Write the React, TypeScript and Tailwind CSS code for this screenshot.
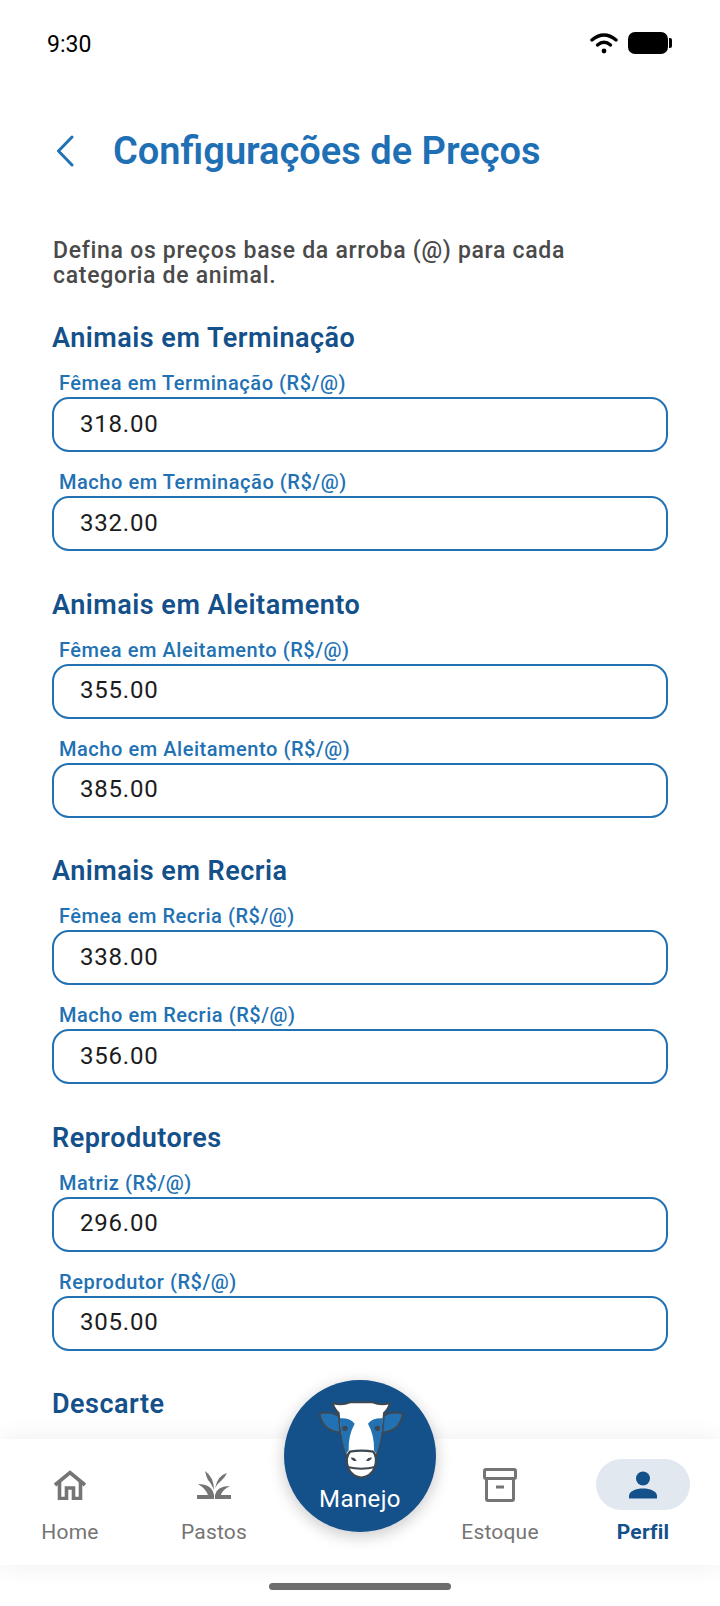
const SECTIONS = [
  {
    title: "Animais em Terminação",
    fields: [
      { label: "Fêmea em Terminação (R$/@)", value: "318.00" },
      { label: "Macho em Terminação (R$/@)", value: "332.00" },
    ],
  },
  {
    title: "Animais em Aleitamento",
    fields: [
      { label: "Fêmea em Aleitamento (R$/@)", value: "355.00" },
      { label: "Macho em Aleitamento (R$/@)", value: "385.00" },
    ],
  },
  {
    title: "Animais em Recria",
    fields: [
      { label: "Fêmea em Recria (R$/@)", value: "338.00" },
      { label: "Macho em Recria (R$/@)", value: "356.00" },
    ],
  },
  {
    title: "Reprodutores",
    fields: [
      { label: "Matriz (R$/@)", value: "296.00" },
      { label: "Reprodutor (R$/@)", value: "305.00" },
    ],
  },
];

function Field({ label, value }: { label: string; value: string }) {
  return (
    <div>
      <p className="pl-[7px] h-[28px] text-[20px] leading-[28px] font-medium tracking-[0.55px] text-[#2271b3]">
        {label}
      </p>
      <div className="flex items-center h-[55px] rounded-[17px] border-2 border-[#2271b3] pl-[26px] pb-[2px] text-[24px] tracking-[0.8px] text-[#1c1c1c]">
        {value}
      </div>
    </div>
  );
}

function CowLogo() {
  return (
    <svg width="120" height="100" viewBox="0 0 360 300">
      {/* ears */}
      <path
        d="M58 74 Q90 64 122 84 L132 130 Q96 132 76 112 Q62 96 58 74Z"
        fill="#2271b3"
        stroke="#3d4852"
        strokeWidth="6"
        strokeLinejoin="round"
      />
      <path
        d="M308 74 Q276 64 244 84 L234 130 Q272 132 292 112 Q306 96 308 74Z"
        fill="#2271b3"
        stroke="#3d4852"
        strokeWidth="6"
        strokeLinejoin="round"
      />
      {/* head */}
      <path
        d="M150 40 Q125 50 98 42 Q104 62 116 72 L120 120 Q128 170 140 205 L228 205 Q240 170 248 120 L252 72 Q264 62 270 42 Q243 50 218 40Z"
        fill="#fff"
        stroke="#3d4852"
        strokeWidth="6"
        strokeLinejoin="round"
      />
      {/* eye patches */}
      <path d="M119 88 Q150 86 164 104 Q144 140 146 184 L138 196 Q126 160 122 120Z" fill="#2271b3" />
      <path d="M249 88 Q218 86 204 104 Q224 140 222 184 L230 196 Q242 160 246 120Z" fill="#2271b3" />
      <circle cx="135" cy="118" r="8" fill="#3d4852" />
      <circle cx="232" cy="118" r="8" fill="#3d4852" />
      {/* muzzle */}
      <path
        d="M150 188 Q184 182 220 188 Q234 205 224 236 Q214 262 184 266 Q154 262 144 236 Q134 205 150 188Z"
        fill="#fff"
        stroke="#3d4852"
        strokeWidth="7"
        strokeLinejoin="round"
      />
      <path d="M152 206 Q164 204 170 216 Q158 218 152 206Z M216 206 Q204 204 198 216 Q210 218 216 206Z" fill="#3d4852" />
      <path d="M142 234 Q184 244 226 234" fill="none" stroke="#3d4852" strokeWidth="6" />
    </svg>
  );
}

function HomeIcon() {
  return (
    <svg width="34" height="30" viewBox="0 0 34 30" fill="none" stroke="#757575" strokeWidth="3.6">
      <path d="M2 15 L17 2.5 L32 15" />
      <path d="M6.5 12 V28.5 H13.5 V18 H20.5 V28.5 H27.5 V12" />
    </svg>
  );
}

function GrassIcon() {
  return (
    <svg width="36" height="30" viewBox="0 0 36 30" fill="#757575">
      <path d="M1 29 V25 H12 Q10 19 2 14 Q16 14 18 25 V29Z" />
      <path d="M35 29 V25 H25 Q26 20 34 16 Q21 16 19 25 V29Z" />
      <path d="M9 1 Q18 7 18 20 Q15 13 12 10 Q10 6 9 1Z" />
      <path d="M31 3 Q22 5 19 18 Q22 13 26 10 Q29 7 31 3Z" />
    </svg>
  );
}

function BoxIcon() {
  return (
    <svg width="34" height="34" viewBox="0 0 34 34" fill="none" stroke="#757575" strokeWidth="3" strokeLinejoin="round">
      <rect x="1.5" y="1.5" width="31" height="9" rx="1.5" />
      <path d="M3.5 10.5 V31 a1.5 1.5 0 0 0 1.5 1.5 H29 a1.5 1.5 0 0 0 1.5 -1.5 V10.5" />
      <path d="M13 19 H21" />
    </svg>
  );
}

function PersonIcon() {
  return (
    <svg width="28" height="28" viewBox="0 0 28 28" fill="#14508a">
      <circle cx="14" cy="7.5" r="7" />
      <path d="M0 27.5 V25 C0 20 7 17.5 14 17.5 C21 17.5 28 20 28 25 V27.5Z" />
    </svg>
  );
}

export default function App() {
  return (
    <div className="relative w-[720px] h-[1606px] overflow-hidden bg-white font-['Roboto',sans-serif]">
      {/* status bar */}
      <div className="flex items-center justify-between h-[44px] mt-[21px] pl-[47px] pr-[48px]">
        <span className="relative top-[2px] text-[23px] text-black">9:30</span>
        <div className="flex items-center gap-[10px]">
          <svg width="28" height="22" viewBox="0 0 28 22" fill="none" stroke="#000" strokeWidth="3.4" strokeLinecap="round">
            <path d="M2 8 Q14 -2 26 8" />
            <path d="M7.5 13 Q14 7.5 20.5 13" />
            <circle cx="14" cy="19" r="2.4" fill="#000" stroke="none" />
          </svg>
          <div className="flex items-center gap-[1px]">
            <div className="w-[40px] h-[22px] rounded-[7px] bg-black" />
            <div className="w-[3px] h-[10px] rounded-r-[2px] bg-black" />
          </div>
        </div>
      </div>

      {/* header */}
      <div className="flex items-center h-[60px] mt-[56px] pl-[56px]">
        <svg width="20" height="32" viewBox="0 0 20 32" fill="none" stroke="#2271b3" strokeWidth="3" strokeLinecap="round" strokeLinejoin="round">
          <path d="M16 2 L2.5 16 L16 30" />
        </svg>
        <h1 className="ml-[37px] text-[38px] font-semibold text-[#1f6fb5]">Configurações de Preços</h1>
      </div>

      {/* content */}
      <div className="px-[52px] pt-[57px]">
        <p className="ml-px max-w-[540px] text-[23px] leading-[25px] font-medium tracking-[0.7px] text-[#4a4a4a]">
          Defina os preços base da arroba (@) para cada categoria de animal.
        </p>
        <div className="mt-[32px] flex flex-col gap-[35.5px]">
          {SECTIONS.map((s) => (
            <section key={s.title}>
              <h2 className="h-[36px] text-[27px] leading-[36px] font-semibold tracking-[0.5px] text-[#14508a]">{s.title}</h2>
              <div className="flex flex-col gap-[16px] mt-[13px]">
                {s.fields.map((f) => (
                  <Field key={f.label} label={f.label} value={f.value} />
                ))}
              </div>
            </section>
          ))}
          <h2 className="h-[36px] text-[27px] leading-[36px] font-semibold tracking-[0.5px] text-[#14508a]">Descarte</h2>
        </div>
      </div>

      {/* bottom nav */}
      <div className="absolute bottom-0 left-0 right-0">
        <div className="relative flex h-[126px] bg-white shadow-[0_0_24px_rgba(0,0,0,0.07)]">
          <div className="flex w-[140px] flex-col items-center">
            <div className="flex h-[51px] mt-[20px] items-center justify-center"><HomeIcon /></div>
            <span className="mt-[8px] text-[21px] leading-[28px] tracking-[0.2px] text-[#757575]">Home</span>
          </div>
          <div className="flex w-[148px] flex-col items-center">
            <div className="flex h-[51px] mt-[20px] items-center justify-center"><GrassIcon /></div>
            <span className="mt-[8px] text-[21px] leading-[28px] tracking-[0.2px] text-[#757575]">Pastos</span>
          </div>
          <div className="w-[144px]" />
          <div className="flex w-[136px] flex-col items-center">
            <div className="flex h-[51px] mt-[20px] items-center justify-center"><BoxIcon /></div>
            <span className="mt-[8px] text-[21px] leading-[28px] tracking-[0.2px] text-[#757575]">Estoque</span>
          </div>
          <div className="flex w-[150px] flex-col items-center">
            <div className="flex w-[94px] h-[51px] mt-[20px] items-center justify-center rounded-full bg-[#e2e8f0]"><PersonIcon /></div>
            <span className="mt-[8px] text-[21px] leading-[28px] font-bold tracking-[0.2px] text-[#14508a]">Perfil</span>
          </div>
          <div className="absolute left-[284px] top-[-59px] flex w-[152px] h-[152px] flex-col items-center rounded-full bg-[#14508a] shadow-[0_4px_16px_rgba(0,0,0,0.22)]">
            <div className="mt-[9px] h-[100px]"><CowLogo /></div>
            <span className="mt-[-5px] text-[24px] leading-[30px] tracking-[0.4px] text-white">Manejo</span>
          </div>
        </div>
        <div className="flex h-[41px] items-center justify-center pt-[1px]">
          <div className="w-[182px] h-[7px] rounded-full bg-[#6e6e6e]" />
        </div>
      </div>
    </div>
  );
}
